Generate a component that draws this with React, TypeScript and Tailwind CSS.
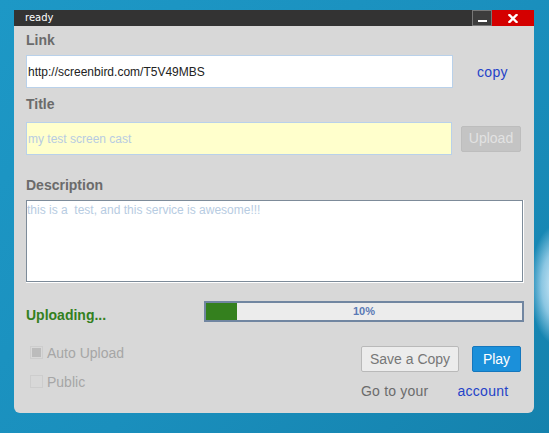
import React from "react";

const sans = { fontFamily: '"Liberation Sans", Arial, sans-serif' };

export default function App() {
  return (
    <div
      className="relative w-[549px] h-[433px] overflow-hidden"
      style={{
        background:
          "radial-gradient(ellipse 26px 60px at 556px 285px, rgba(210,235,248,1) 0%, rgba(160,210,235,0.85) 55%, rgba(27,140,185,0) 100%), linear-gradient(135deg, #1d98c6 0%, #1a8fbd 55%, #1582ad 100%)",
      }}
    >
      <div className="ml-[14px] mt-[10px] w-[520px] h-[403px] flex flex-col bg-[#d8d8d8] rounded-b-[6px]" style={sans}>
        {/* title bar */}
        <div className="h-[16px] bg-[#333333] flex items-center">
          <span className="ml-[11px] text-white text-[10px] leading-none" style={{ fontFamily: '"DejaVu Sans", sans-serif' }}>
            ready
          </span>
          <div className="ml-auto flex h-[16px]">
            <div className="w-[20px] h-[16px] bg-[#3d3d3d] border border-[#777] flex items-end justify-center pb-[3px]">
              <div className="w-[9px] h-[2px] bg-white" />
            </div>
            <div className="w-[42px] h-[16px] bg-[#d40000] flex items-center justify-center">
              <svg width="10" height="9" viewBox="0 0 10 9">
                <path d="M1.5 1 L8.5 8 M8.5 1 L1.5 8" stroke="#fff" strokeWidth="2.4" strokeLinecap="square" />
              </svg>
            </div>
          </div>
        </div>

        <div className="flex flex-col pl-[12px]">
          <div className="mt-[6px] h-[16px] leading-[16px] text-[14px] font-bold text-[#6b6b6b]">Link</div>
          <div className="mt-[7px] flex items-center">
            <div className="w-[427px] h-[33px] bg-white border border-[#b9d1ea] flex items-center pl-[1px] text-[12px] text-[#222]">
              http://screenbird.com/T5V49MBS
            </div>
            <span className="ml-[24px] mt-[1px] text-[14px] tracking-[0.3px] text-[#2443c8]">copy</span>
          </div>

          <div className="mt-[8px] h-[16px] leading-[16px] text-[14px] font-bold text-[#6b6b6b]">Title</div>
          <div className="mt-[10px] flex items-center">
            <div className="w-[426px] h-[33px] bg-[#ffffcc] border border-[#b9d1ea] flex items-center pl-[1px] text-[12px] text-[#b7cce2]">
              my test screen cast
            </div>
            <div className="ml-[9px] w-[60px] h-[26px] bg-[#c4c4c4] border border-[#bdbdbd] rounded-[2px] flex items-center justify-center text-[14px] text-[#e2e2e2]">
              Upload
            </div>
          </div>

          <div className="mt-[22px] h-[16px] leading-[16px] text-[14px] font-bold text-[#6b6b6b]">Description</div>
          <div className="mt-[7px] w-[498px] h-[83px] border-r border-b border-white">
            <div className="w-[497px] h-[82px] bg-white border border-[#7d8b99] text-[12px] text-[#b7cce2] leading-[16px] pt-[1px]">
              this is a&nbsp; test, and this service is awesome!!!
            </div>
          </div>

          <div className="mt-[18px] flex items-start">
            <div className="mt-[6px] text-[14px] font-bold text-[#338020] leading-[16px]">Uploading...</div>
            <div className="ml-auto mr-[10px] relative w-[320px] h-[21px] border-2 border-[#7186a1] bg-[#ececec]">
              <div className="absolute left-0 top-0 h-full w-[31px] bg-[#34801e]" />
              <div className="absolute inset-0 flex items-center justify-center text-[11px] font-bold text-[#5a79b5]">10%</div>
            </div>
          </div>

          <div className="mt-[23px] flex">
            <div className="w-[335px] shrink-0 flex flex-col pl-[4px]">
              <div className="flex items-center h-[13px]">
                <div className="w-[13px] h-[13px] border border-[#cdcdcd] flex items-center justify-center">
                  <div className="w-[9px] h-[9px] bg-[#bcbcbc]" />
                </div>
                <span className="ml-[4px] text-[14px] leading-[16px] text-[#a6a6a6] whitespace-nowrap">Auto Upload</span>
              </div>
              <div className="flex items-center h-[13px] mt-[16px]">
                <div className="w-[13px] h-[13px] border border-[#cdcdcd]" />
                <span className="ml-[4px] text-[14px] leading-[16px] text-[#a6a6a6] whitespace-nowrap">Public</span>
              </div>
            </div>
            <div className="flex flex-col">
              <div className="flex">
                <div className="w-[98px] h-[26px] bg-[#ececec] border border-[#b9b9b9] rounded-[2px] flex items-center justify-center text-[14px] text-[#777] whitespace-nowrap">
                  Save a Copy
                </div>
                <div className="ml-[13px] w-[49px] h-[26px] bg-[#1b90da] border border-[#1577bd] rounded-[2px] flex items-center justify-center text-[14px] text-white">
                  Play
                </div>
              </div>
              <div className="mt-[11px] flex text-[14px] leading-[16px] whitespace-nowrap">
                <span className="text-[#6b6b6b] tracking-[0.2px]">Go to your</span>
                <span className="ml-[29px] text-[#2443c8] tracking-[0.3px]">account</span>
              </div>
            </div>
          </div>
        </div>
      </div>
    </div>
  );
}
